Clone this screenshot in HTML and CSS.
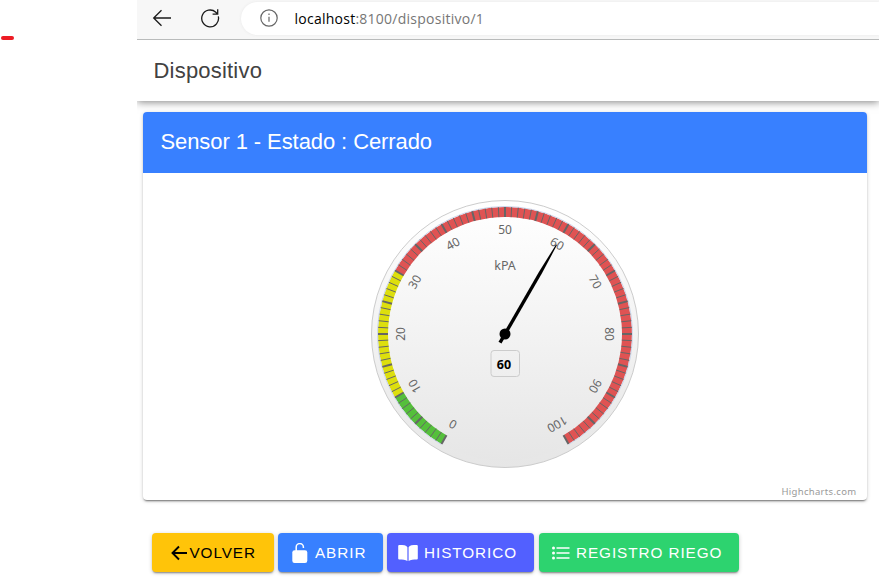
FILE: index.html
```html
<!DOCTYPE html>
<html lang="es">
<head>
<meta charset="utf-8">
<title>Dispositivo</title>
<link rel="stylesheet" href="styles.css">
</head>
<body>
<aside class="margin"><span class="mark"></span></aside>
<div class="window">
  <div class="browser">
    <svg class="nav-icon" width="20" height="20" viewBox="0 0 20 20"><path d="M19 10H2M9.500 2.200 1.700 10l7.800 7.800"/></svg>
    <svg class="nav-icon reload" width="20" height="20" viewBox="0 0 20 20"><path d="M18.300 8.400A8.400 8.400 0 1 1 15.800 4.200L17.500 6M17.700 1.200V6.100H12.600"/></svg>
    <div class="address">
      <svg class="info" width="18" height="18" viewBox="0 0 18 18"><circle cx="9" cy="9" r="8.200"/><path d="M9 7.800v5M9 4.600v1.400"/></svg>
      <span class="url"><b>localhost</b>:8100/dispositivo/1</span>
    </div>
  </div>
  <header class="toolbar"><h1>Dispositivo</h1></header>
  <main class="content">
    <section class="card">
      <h2>Sensor 1 - Estado : Cerrado</h2>
      <div class="chart">
        <svg id="gauge" class="gauge" width="280" height="280" viewBox="-140 -140 280 280">
          <defs>
            <linearGradient id="rim" x1="0" y1="0" x2="0" y2="1"><stop offset="0" stop-color="#fff"/><stop offset="1" stop-color="#e6e6e6"/></linearGradient>
          </defs>
          <circle class="rim" r="133.500" fill="url(#rim)"/>
          <circle r="127" fill="url(#rim)"/>
          <g id="bands"></g>
          <path class="edge" d="M-63.750 110.400A127.500 127.500 0 1 1 63.750 110.400"/>
          <g id="ticks"></g>
          <g id="labels"></g>
          <text class="unit" y="-64">kPA</text>
          <rect class="value-box" x="-14" y="16.500" width="28.500" height="26" rx="3"/>
          <text class="value" x="-1" y="34.500">60</text>
          <g transform="rotate(30)"><path d="M-1.700 10-1.700-71-.5-103H.5L1.700-71V10Z"/></g>
          <circle r="5.500"/>
        </svg>
        <span class="credits">Highcharts.com</span>
      </div>
    </section>
    <div class="actions">
      <button class="btn back"><svg width="17" height="16" viewBox="0 0 17 16"><path d="M16 8H2M8 1.500 1.500 8 8 14.500" fill="none" stroke="#000" stroke-width="1.900"/></svg><span>VOLVER</span></button>
      <button class="btn open"><svg width="16" height="20" viewBox="0 0 16 20"><rect x=".3" y="7.300" width="15" height="12.700" rx="2.300" fill="#fff"/><path d="M4.200 8V4.400a3.600 3.600 0 0 1 7.200-.4v1" fill="none" stroke="#fff" stroke-width="1.500"/></svg><span>ABRIR</span></button>
      <button class="btn history"><svg width="20" height="18" viewBox="0 0 20 18"><path d="M.2 2Q.2 1 1.200 1C5.500 1 8.300 1.200 9.400 3.200V17C7.500 15.500 4.500 15.400 1.200 15.400Q.2 15.400.2 14.400ZM19.800 2Q19.800 1 18.800 1C14.500 1 11.700 1.200 10.600 3.200V17C12.500 15.500 15.500 15.400 18.800 15.400Q19.800 15.400 19.800 14.400Z" fill="#fff"/></svg><span>HISTORICO</span></button>
      <button class="btn log"><svg width="18" height="14" viewBox="0 0 18 14"><path d="M4.500 2H17.500M4.500 7H17.500M4.500 12H17.500" stroke="#fff" stroke-width="1.400"/><g fill="#fff"><circle cx="1.500" cy="2" r="1.500"/><circle cx="1.500" cy="7" r="1.500"/><circle cx="1.500" cy="12" r="1.500"/></g></svg><span>REGISTRO RIEGO</span></button>
    </div>
  </main>
</div>
<script src="gauge.js"></script>
</body>
</html>
```
FILE: styles.css
```css
* { box-sizing: border-box; }
body { margin: 0; width: 879px; height: 584px; overflow: hidden; display: flex; background: #fff; font-family: "Liberation Sans", Arial, sans-serif; }
.margin { width: 137px; padding: 36px 0 0 1px; }
.mark { display: block; width: 13px; height: 4px; border-radius: 2px; background: #ed1c24; }
.window { flex: 1; display: flex; flex-direction: column; }
.browser { height: 40px; padding: 0 0 3px 15px; display: flex; align-items: center; background: #f7f7f7; border-bottom: 1px solid #b9bbbb; }
.nav-icon { fill: none; stroke: #1b1b1b; stroke-width: 1.3; }
.reload { margin-left: 28px; }
.address { flex: 1; height: 33px; margin-left: 21px; padding-left: 19px; display: flex; align-items: center; background: #fff; border-radius: 17px 0 0 17px; box-shadow: 0 0 3px #e8e8e8; }
.info { fill: none; stroke: #666; stroke-width: 1.2; }
.url { margin-left: 16.500px; font: 14px "Open Sans", sans-serif; letter-spacing: .25px; color: #767676; white-space: nowrap; }
.url b { font-weight: 400; color: #000; }
.toolbar { height: 61px; padding-left: 16.500px; display: flex; align-items: center; background: #fff; box-shadow: 0 1px 8px rgba(0,0,0,.5); clip-path: inset(0 0 -14px 0); z-index: 1; }
h1, h2 { margin: 0; font-weight: 400; }
h1 { font-size: 22px; letter-spacing: .2px; color: #424242; }
.content { flex: 1; padding: 11px 12px 0 6px; }
.card { height: 388px; border-radius: 4px; background: #fff; box-shadow: 0 2px 2px -1px rgba(0,0,0,.5), 0 1px 4px rgba(0,0,0,.18); overflow: hidden; }
h2 { height: 61px; padding: 0 0 1px 17.500px; display: flex; align-items: center; background: #3880ff; color: #fff; font-size: 22px; letter-spacing: -.09px; }
.chart { height: 327px; position: relative; padding-top: 21px; text-align: center; }
.gauge { display: block; margin: 0 auto; font-family: "Noto Sans", sans-serif; font-size: 12px; text-anchor: middle; }
.rim { stroke: #ccc; stroke-width: 1; }
.edge { fill: none; stroke: #ccd6eb; stroke-width: 1; }
.label, .unit { fill: #666; }
.label { font-size: 12px; }
.unit { font-size: 12.500px; }
.value { font-size: 12.500px; font-weight: 700; }
.value-box { fill: none; stroke: #ccc; }
.tick { stroke: #666; stroke-width: 1; }
.tick.major { stroke-width: 2; }
.credits { position: absolute; right: 10.500px; bottom: 2px; font: 9.500px "Noto Sans", sans-serif; letter-spacing: .32px; color: #999; }
.actions { margin: 33px 0 0 9px; display: flex; }
.btn { height: 39px; border: 0; padding: 0; border-radius: 4px; display: flex; align-items: center; font: 15.300px "Liberation Sans", sans-serif; letter-spacing: .92px; color: #fff; white-space: nowrap; box-shadow: 0 2px 2px -1px rgba(0,0,0,.4), 0 1px 4px rgba(0,0,0,.2); }
.back { width: 122px; padding-left: 19px; background: #ffc409; color: #000; }
.back span { margin-left: 1.500px; }
.open { width: 105px; margin-left: 4px; padding-left: 14px; background: #3880ff; }
.open span { margin-left: 7px; }
.history { width: 147px; margin-left: 4px; padding-left: 11px; background: #5260ff; }
.history span { margin-left: 6px; }
.log { width: 200px; margin-left: 5px; padding-left: 13px; background: #2dd36f; }
.log span { margin-left: 6px; }
```
FILE: gauge.js
```js
const ns = 'http://www.w3.org/2000/svg';
const outer = 127, inner = 117, labelRadius = 104.5;
const angle = v => -150 + 3 * v;
const point = (v, r) => {
  const a = angle(v) * Math.PI / 180;
  return [r * Math.sin(a), -r * Math.cos(a)].map(n => n.toFixed(2)).join(' ');
};
function add(parent, name, attrs, text) {
  const el = document.createElementNS(ns, name);
  for (const key in attrs) el.setAttribute(key, attrs[key]);
  if (text !== undefined) el.textContent = text;
  document.getElementById(parent).appendChild(el);
}
[[0, 10, '#55BF3B'], [10, 30, '#DDDF0D'], [30, 100, '#DF5353']].forEach(([from, to, fill]) => {
  const large = to - from > 60 ? 1 : 0;
  add('bands', 'path', { fill, d: `M${point(from, outer)}A${outer} ${outer} 0 ${large} 1 ${point(to, outer)}L${point(to, inner)}A${inner} ${inner} 0 ${large} 0 ${point(from, inner)}Z` });
});
for (let v = 0; v <= 100; v++) {
  add('ticks', 'path', { class: v % 5 ? 'tick' : 'tick major', d: `M${point(v, inner)}L${point(v, outer)}` });
  if (v % 10 === 0) add('labels', 'text', { class: 'label', y: 4.5, transform: `rotate(${angle(v)}) translate(0 ${-labelRadius})` }, v);
}
```
